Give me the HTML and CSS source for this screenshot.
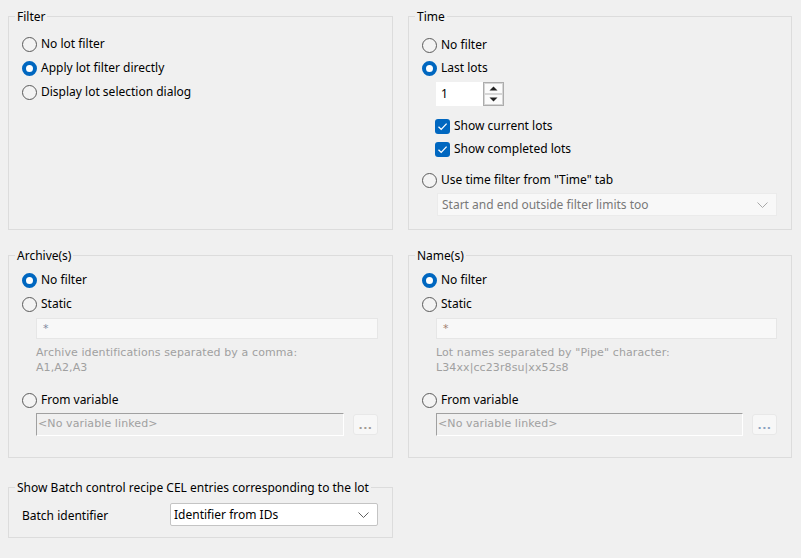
FILE: index.html
```html
<!DOCTYPE html>
<html>
<head>
<meta charset="utf-8">
<link rel="stylesheet" href="styles.css">
</head>
<body>
<div class="page">
  <fieldset class="group">
    <legend>Filter</legend>
    <div class="body body-filter">
      <label class="radio"><span class="rb"></span>No lot filter</label>
      <label class="radio"><span class="rb on"></span>Apply lot filter directly</label>
      <label class="radio"><span class="rb"></span>Display lot selection dialog</label>
    </div>
  </fieldset>

  <fieldset class="group group-r">
    <legend>Time</legend>
    <div class="body body-time">
      <label class="radio"><span class="rb"></span>No filter</label>
      <label class="radio"><span class="rb on"></span>Last lots</label>
      <div class="spinner">
        <div class="spin-field">1</div>
        <div class="spin-btns">
          <span class="spin-btn"><svg width="9" height="5" viewBox="0 0 9 5"><path d="M0.5 4.5 L4.5 0.5 L8.5 4.5 Z" fill="#222"/></svg></span>
          <span class="spin-btn"><svg width="9" height="5" viewBox="0 0 9 5"><path d="M0.5 0.5 L4.5 4.5 L8.5 0.5 Z" fill="#222"/></svg></span>
        </div>
      </div>
      <label class="check check-first"><span class="cb"><svg width="11" height="9" viewBox="0 0 11 9"><path d="M1.5 4.8 L4.2 7.4 L9.6 1.6" fill="none" stroke="#fff" stroke-width="1.3"/></svg></span>Show current lots</label>
      <label class="check"><span class="cb"><svg width="11" height="9" viewBox="0 0 11 9"><path d="M1.5 4.8 L4.2 7.4 L9.6 1.6" fill="none" stroke="#fff" stroke-width="1.3"/></svg></span>Show completed lots</label>
      <label class="radio radio-time"><span class="rb"></span>Use time filter from "Time" tab</label>
      <div class="combo combo-disabled">
        <span>Start and end outside filter limits too</span>
        <svg width="11" height="6" viewBox="0 0 11 6"><path d="M0.5 0.5 L5.5 5.5 L10.5 0.5" fill="none" stroke="#a8a8a8" stroke-width="1"/></svg>
      </div>
    </div>
  </fieldset>

  <fieldset class="group">
    <legend>Archive(s)</legend>
    <div class="body body-list">
      <label class="radio"><span class="rb on"></span>No filter</label>
      <label class="radio"><span class="rb"></span>Static</label>
      <div class="static-input"><span class="star star-a">*</span></div>
      <div class="helper">
        <div class="helper-line">Archive identifications separated by a comma:</div>
        <div class="helper-line">A1,A2,A3</div>
      </div>
      <label class="radio radio-var"><span class="rb"></span>From variable</label>
      <div class="var-row">
        <div class="var-input">&lt;No variable linked&gt;</div>
        <div class="dots-btn"><span class="dots dots-a">...</span></div>
      </div>
    </div>
  </fieldset>

  <fieldset class="group group-r">
    <legend>Name(s)</legend>
    <div class="body body-list">
      <label class="radio"><span class="rb on"></span>No filter</label>
      <label class="radio"><span class="rb"></span>Static</label>
      <div class="static-input"><span class="star star-n">*</span></div>
      <div class="helper">
        <div class="helper-line">Lot names separated by "Pipe" character:</div>
        <div class="helper-line">L34xx|cc23r8su|xx52s8</div>
      </div>
      <label class="radio radio-var"><span class="rb"></span>From variable</label>
      <div class="var-row">
        <div class="var-input">&lt;No variable linked&gt;</div>
        <div class="dots-btn"><span class="dots dots-n">...</span></div>
      </div>
    </div>
  </fieldset>

  <fieldset class="group group-batch">
    <legend>Show Batch control recipe CEL entries corresponding to the lot</legend>
    <div class="body body-batch">
      <span class="batch-label">Batch identifier</span>
      <div class="combo combo-active">
        <span>Identifier from IDs</span>
        <svg width="11" height="6" viewBox="0 0 11 6"><path d="M0.5 0.5 L5.5 5.5 L10.5 0.5" fill="none" stroke="#606060" stroke-width="1"/></svg>
      </div>
    </div>
  </fieldset>
</div>
</body>
</html>
```

FILE: styles.css
```css
html, body {
  margin: 0;
  padding: 0;
  background: #f0f0f0;
}

body {
  font-family: "Noto Sans", "Open Sans", "Liberation Sans", sans-serif;
  font-size: 12px;
  color: #000;
  width: 801px;
  height: 558px;
  overflow: hidden;
}

.page {
  display: grid;
  grid-template-columns: 385px 384px;
  grid-template-rows: 222px 211px 63px;
  column-gap: 15px;
  row-gap: 17px;
  padding: 8px 0 0 8px;
}

.group {
  margin: 0;
  padding: 0;
  min-width: 0;
  border: 1px solid #dcdcdc;
  box-sizing: border-box;
}

.group legend {
  margin-left: 6px;
  padding: 1px 2px 0;
  line-height: 16px;
  height: 17px;
  box-sizing: border-box;
}

.group-batch {
  grid-column: 1;
  margin-top: 4px;
}

.body {
  display: flex;
  flex-direction: column;
  padding: 0 14px 0 13px;
}

.body-filter {
  padding-top: 9px;
  gap: 4px;
}

.body-time {
  padding-top: 10px;
  gap: 3px;
}

.body-list {
  padding-top: 6px;
  gap: 4px;
}

.radio, .check {
  display: flex;
  align-items: center;
  height: 20px;
  line-height: 20px;
  white-space: nowrap;
}

.rb {
  width: 15px;
  height: 15px;
  box-sizing: border-box;
  border-radius: 50%;
  border: 1px solid #5a5a5a;
  background: #f3f3f3;
  margin-right: 4px;
  flex: none;
}

.rb.on {
  border: 4px solid #0067c0;
  background: #fff;
}

.spinner {
  display: flex;
  margin: 1px 0 0 14px;
  width: 68px;
  height: 24px;
}

.spin-field {
  width: 47px;
  background: #fff;
  padding-left: 5px;
  box-sizing: border-box;
  line-height: 24px;
}

.spin-btns {
  width: 21px;
  display: flex;
  flex-direction: column;
  border: 1px solid #acacac;
  box-sizing: border-box;
  background: #fbfbfb;
}

.spin-btn {
  flex: 1;
  display: flex;
  align-items: center;
  justify-content: center;
  border: 1px solid #d6d6d6;
}

.check {
  padding-left: 13px;
}

.check-first {
  margin-top: 7px;
}

.cb {
  width: 15px;
  height: 15px;
  border-radius: 3px;
  background: #0067c0;
  display: flex;
  align-items: center;
  justify-content: center;
  margin-right: 4px;
  flex: none;
}

.radio-time {
  margin-top: 8px;
}

.combo {
  display: flex;
  align-items: center;
  justify-content: space-between;
  box-sizing: border-box;
  height: 23px;
  padding: 0 8px 0 4px;
  white-space: nowrap;
}

.combo-disabled {
  margin: 0 0 0 15px;
  background: #f8f8f8;
  border: 1px solid #ebebeb;
  color: #787878;
}

.static-input {
  margin: 0 0 0 14px;
  height: 21px;
  box-sizing: border-box;
  background: #f8f8f8;
  border: 1px solid #e6e6e6;
  padding-left: 6px;
  line-height: 19px;
  font-family: "DejaVu Sans", sans-serif;
  font-size: 11px;
}

.star-a {
  color: #7f8a9e;
}

.star-n {
  color: #a0806e;
}

.helper {
  margin: 2px 0 0 14px;
  color: #a0a0a0;
  font-family: "DejaVu Sans", sans-serif;
  font-size: 11px;
  letter-spacing: 0.1px;
}

.helper-line {
  height: 15px;
  line-height: 15px;
  white-space: nowrap;
}

.radio-var {
  margin-top: 11px;
}

.var-row {
  display: flex;
  align-items: center;
  gap: 9px;
  margin: -1px 0 0 14px;
}

.var-input {
  flex: 1;
  height: 23px;
  box-sizing: border-box;
  border-top: 1px solid #a0a0a0;
  border-left: 1px solid #a0a0a0;
  border-bottom: 1px solid #fff;
  border-right: 1px solid #fff;
  color: #a0a0a0;
  padding-left: 1px;
  line-height: 19px;
  font-family: "DejaVu Sans", sans-serif;
  font-size: 11px;
  letter-spacing: 0.1px;
}

.dots-btn {
  width: 25px;
  height: 21px;
  box-sizing: border-box;
  border: 1px solid #e8e8e8;
  border-radius: 3px;
  background: #f7f7f7;
  display: flex;
  align-items: center;
  justify-content: center;
}

.dots {
  font-family: "DejaVu Sans", sans-serif;
  font-size: 11px;
  letter-spacing: 0.5px;
  line-height: 12px;
  margin-top: 2px;
  font-weight: bold;
}

.dots-a {
  color: #a39b95;
}

.dots-n {
  color: #8ba2c0;
}

.body-batch {
  flex-direction: row;
  align-items: center;
  padding: 7px 0 0 13px;
}

.batch-label {
  width: 148px;
  flex: none;
  padding-top: 2px;
}

.combo-active {
  width: 208px;
  background: #fff;
  border: 1px solid #c4c4c4;
  border-radius: 2px;
  padding-left: 3px;
}
```
